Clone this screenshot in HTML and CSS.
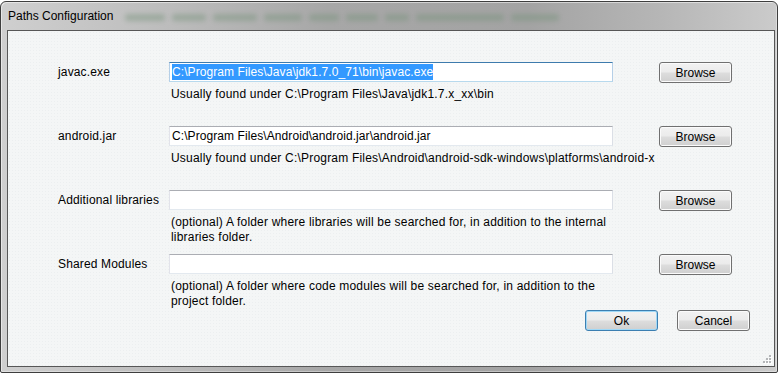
FILE: index.html
```html
<!DOCTYPE html>
<html lang="en">
<head>
  <meta charset="UTF-8" />
  <title>Paths Configuration</title>
  <link rel="stylesheet" href="styles.css">
</head>
<body>
  <div class="window">
    <div class="titlebar">
      <span class="title">Paths Configuration</span>
      <div class="glass">
        <span class="smudge w40"></span>
        <span class="smudge w34"></span>
        <span class="smudge w44"></span>
        <span class="smudge w38"></span>
        <span class="smudge w30"></span>
        <span class="smudge w32"></span>
        <span class="smudge w24"></span>
        <span class="smudge w88"></span>
        <span class="smudge w48"></span>
      </div>
    </div>

    <div class="client">
      <div class="fields">
        <div class="field">
          <span class="label">javac.exe</span>
          <div class="textbox focused"><span class="selected">C:\Program Files\Java\jdk1.7.0_71\bin\javac.exe</span></div>
          <button class="btn browse">Browse</button>
          <div class="hint">Usually found under C:\Program Files\Java\jdk1.7.x_xx\bin</div>
        </div>

        <div class="field">
          <span class="label">android.jar</span>
          <div class="textbox">C:\Program Files\Android\android.jar\android.jar</div>
          <button class="btn browse">Browse</button>
          <div class="hint">Usually found under C:\Program Files\Android\android-sdk-windows\platforms\android-x</div>
        </div>

        <div class="field">
          <span class="label">Additional libraries</span>
          <div class="textbox"></div>
          <button class="btn browse">Browse</button>
          <div class="hint">(optional) A folder where libraries will be searched for, in addition to the internal<br>libraries folder.</div>
        </div>

        <div class="field">
          <span class="label">Shared Modules</span>
          <div class="textbox"></div>
          <button class="btn browse">Browse</button>
          <div class="hint">(optional) A folder where code modules will be searched for, in addition to the<br>project folder.</div>
        </div>
      </div>

      <div class="footer">
        <button class="btn default">Ok</button>
        <button class="btn">Cancel</button>
      </div>

      <svg class="grip" width="9" height="9" viewBox="0 0 9 9">
        <rect x="7" y="1" width="2" height="2" fill="#fff"/>
        <rect x="4" y="4" width="2" height="2" fill="#fff"/>
        <rect x="7" y="4" width="2" height="2" fill="#fff"/>
        <rect x="1" y="7" width="2" height="2" fill="#fff"/>
        <rect x="4" y="7" width="2" height="2" fill="#fff"/>
        <rect x="7" y="7" width="2" height="2" fill="#fff"/>
        <rect x="6" y="0" width="2" height="2" fill="#b4b6b8"/>
        <rect x="3" y="3" width="2" height="2" fill="#b4b6b8"/>
        <rect x="6" y="3" width="2" height="2" fill="#b4b6b8"/>
        <rect x="0" y="6" width="2" height="2" fill="#b4b6b8"/>
        <rect x="3" y="6" width="2" height="2" fill="#b4b6b8"/>
        <rect x="6" y="6" width="2" height="2" fill="#b4b6b8"/>
      </svg>
    </div>
  </div>
</body>
</html>
```

FILE: styles.css
```css
body {
  margin: 0;
  background: #fff;
  font-family: "Liberation Sans", Arial, sans-serif;
  font-size: 12px;
  color: #000;
}
.window {
  box-sizing: border-box;
  width: 778px;
  height: 372px;
  margin-top: 1px;
  border: 1px solid #3e3e3e;
  border-radius: 6px 6px 2px 2px;
  padding: 0 2px 5px 6px;
  background: linear-gradient(to right, #cfcfcf 0%, #bcbcbc 22%, #a7a7a7 42%, #a3a3a3 68%, #b6b6b6 85%, #cbcbcb 100%);
  box-shadow: inset 1px 1px 0 rgba(255,255,255,0.5), inset -1px -1px 0 rgba(255,255,255,0.35);
}
.titlebar {
  height: 28px;
  display: flex;
  align-items: center;
  margin-left: 1px;
}
.title {
  font-size: 12px;
  color: #000;
}
.glass {
  display: flex;
  align-items: center;
  gap: 7px;
  margin-left: 12px;
  margin-top: 3px;
}
.smudge {
  display: block;
  height: 7px;
  border-radius: 3px;
  background: #76927a;
  opacity: 0.45;
  filter: blur(2.5px);
}
.w24 { width: 24px; }
.w30 { width: 30px; }
.w32 { width: 32px; }
.w34 { width: 34px; }
.w38 { width: 38px; }
.w40 { width: 40px; }
.w44 { width: 44px; }
.w48 { width: 48px; }
.w88 { width: 88px; }
.client {
  position: relative;
  box-sizing: border-box;
  height: 337px;
  border: 1px solid #575757;
  background-color: #f4f6f6;
  background-image: radial-gradient(#eceff0 0.8px, transparent 0.8px);
  background-size: 3px 3px;
  padding: 31px 0 0 50px;
}
.fields {
  display: grid;
  grid-template-rows: 64px 64px 64px 56px;
}
.field {
  display: grid;
  grid-template-columns: 111px 444px 119px;
  grid-template-rows: 20px auto;
  align-content: start;
}
.label {
  line-height: 20px;
  letter-spacing: 0.15px;
}
.textbox {
  box-sizing: border-box;
  height: 20px;
  background: #fff;
  border: 1px solid;
  border-color: #abadb3 #dbdfe6 #e3e9ef #e2e3ea;
  padding: 1px 0 0 2px;
  line-height: 16px;
  letter-spacing: 0.08px;
  white-space: nowrap;
  overflow: hidden;
}
.textbox.focused {
  border-color: #3d7bad #b5cfe7 #b7d9ed #b5cfe7;
}
.selected {
  display: inline-block;
  background: #3399ff;
  color: #fff;
  line-height: 16px;
}
.hint {
  grid-column: 2 / span 2;
  margin-top: 5px;
  padding-left: 2px;
  line-height: 15px;
  letter-spacing: 0.2px;
  white-space: nowrap;
}
.btn {
  box-sizing: border-box;
  width: 73px;
  height: 21px;
  padding: 0;
  font-family: "Liberation Sans", Arial, sans-serif;
  font-size: 12px;
  color: #000;
  border: 1px solid #707070;
  border-radius: 3px;
  background: linear-gradient(#f2f2f2 0%, #ebebeb 48%, #dddddd 52%, #cfcfcf 100%);
  box-shadow: inset 0 0 0 1px #fbfbfb;
}
.browse {
  justify-self: end;
}
.btn.default {
  border-color: #3c7fb1;
  box-shadow: inset 0 0 0 1px #9fd8f7;
}
.footer {
  display: flex;
  justify-content: flex-end;
  gap: 19px;
  margin-top: 0;
  padding-right: 24px;
}
.grip {
  position: absolute;
  right: 2px;
  bottom: 2px;
}
```
